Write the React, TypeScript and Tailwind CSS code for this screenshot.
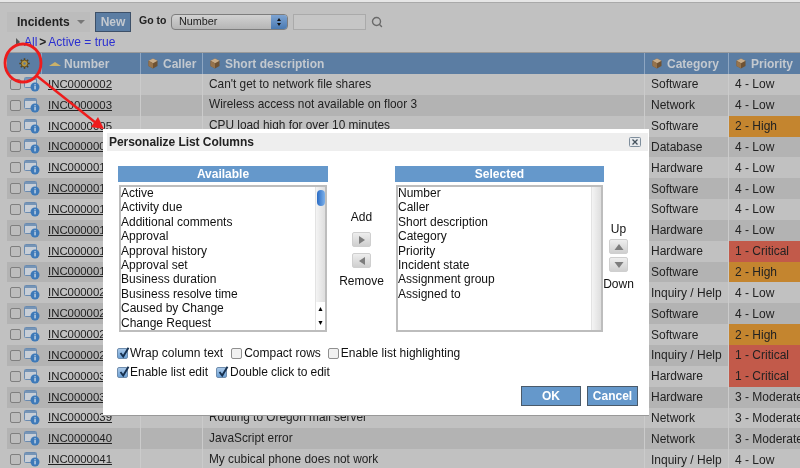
import { Search } from "lucide-react";

type Row = { n: string; d: string; c: string; p: string };
const rows: Row[] = [
  { n: "INC0000002", d: "Can't get to network file shares", c: "Software", p: "4 - Low" },
  { n: "INC0000003", d: "Wireless access not available on floor 3", c: "Network", p: "4 - Low" },
  { n: "INC0000005", d: "CPU load high for over 10 minutes", c: "Software", p: "2 - High" },
  { n: "INC0000006", d: "Oracle database offline", c: "Database", p: "4 - Low" },
  { n: "INC0000011", d: "Printer jam", c: "Hardware", p: "4 - Low" },
  { n: "INC0000012", d: "Email server slow", c: "Software", p: "4 - Low" },
  { n: "INC0000013", d: "EMAIL is slow", c: "Software", p: "4 - Low" },
  { n: "INC0000014", d: "Keyboard broken", c: "Hardware", p: "4 - Low" },
  { n: "INC0000015", d: "Server down", c: "Hardware", p: "1 - Critical" },
  { n: "INC0000016", d: "Reset password", c: "Software", p: "2 - High" },
  { n: "INC0000020", d: "How do I create a sub-folder", c: "Inquiry / Help", p: "4 - Low" },
  { n: "INC0000022", d: "Need software update", c: "Software", p: "4 - Low" },
  { n: "INC0000024", d: "Lost connection", c: "Software", p: "2 - High" },
  { n: "INC0000025", d: "Need help", c: "Inquiry / Help", p: "1 - Critical" },
  { n: "INC0000031", d: "When can we get off Remedy?", c: "Hardware", p: "1 - Critical" },
  { n: "INC0000032", d: "Hard drive failure", c: "Hardware", p: "3 - Moderate" },
  { n: "INC0000039", d: "Routing to Oregon mail server", c: "Network", p: "3 - Moderate" },
  { n: "INC0000040", d: "JavaScript error", c: "Network", p: "3 - Moderate" },
  { n: "INC0000041", d: "My cubical phone does not work", c: "Inquiry / Help", p: "4 - Low" },
];

const available = ["Active", "Activity due", "Additional comments", "Approval", "Approval history", "Approval set", "Business duration", "Business resolve time", "Caused by Change", "Change Request"];
const selected = ["Number", "Caller", "Short description", "Category", "Priority", "Incident state", "Assignment group", "Assigned to"];

function Cube() {
  return (
    <svg width="10" height="11" viewBox="0 0 10 11" className="shrink-0">
      <path d="M5 .5 9.5 2.8v5.2L5 10.5.5 8V2.8z" fill="#6f5233" />
      <path d="M5 .5 9.5 2.8 5 5.2.5 2.8z" fill="#c9ad8a" />
      <path d="M5 5.2v5.3L.5 8V2.8z" fill="#96734c" />
    </svg>
  );
}

function Gear() {
  return (
    <svg width="11" height="11" viewBox="0 0 11 11">
      <g stroke="#54431f" strokeWidth="1.6">
        <path d="M5.5 .3v10.4M.3 5.5h10.4M1.8 1.8l7.4 7.4M9.2 1.8 1.8 9.2" />
      </g>
      <circle cx="5.5" cy="5.5" r="3.4" fill="#b8973f" stroke="#54431f" strokeWidth=".8" />
      <circle cx="5.5" cy="5.5" r="1.2" fill="#5b7da3" />
    </svg>
  );
}

function InfoIcon() {
  return (
    <svg width="16" height="15" viewBox="0 0 16 15" className="shrink-0">
      <rect x=".5" y=".5" width="12" height="10" rx="1" fill="#c8ced6" stroke="#6a8bb0" />
      <rect x="1" y="1" width="11" height="2" fill="#7594b6" />
      <circle cx="11" cy="10" r="4.5" fill="#3d79b8" />
      <rect x="10.4" y="9" width="1.3" height="3.4" fill="#cfdcea" />
      <rect x="10.4" y="7.2" width="1.3" height="1.2" fill="#cfdcea" />
    </svg>
  );
}

function Check({ on }: { on?: boolean }) {
  return on ? (
    <span className="relative w-[11px] h-[11px] rounded-[2px] border border-[#6f8dad] bg-linear-to-b from-[#a9c8e8] to-[#6ea2d6] shrink-0">
      <svg width="13" height="13" viewBox="0 0 13 13" className="absolute -top-[3px] left-0">
        <path d="M2.5 7 5.2 10.5 10.5 1.8" fill="none" stroke="#16304f" strokeWidth="1.9" />
      </svg>
    </span>
  ) : (
    <span className="w-[11px] h-[11px] rounded-[2px] border border-[#8f8f8f] bg-[#f1f1f1] shrink-0" />
  );
}

function ArrowButton({ dir }: { dir: "l" | "r" | "u" | "d" }) {
  const pts = { l: "10,3 10,11 4,7", r: "4,3 4,11 10,7", u: "2.5,10 11.5,10 7,4", d: "2.5,4 11.5,4 7,10" }[dir];
  return (
    <div className="w-[19px] h-[15px] rounded-[2px] border border-[#cfcfcf] bg-linear-to-b from-[#eeeeee] to-[#cfcfcf] flex items-center justify-center">
      <svg width="14" height="14" viewBox="0 0 14 14">
        <polygon points={pts} fill="#7d7d7d" />
      </svg>
    </div>
  );
}

function ListBox({ items, thumb }: { items: string[]; thumb?: boolean }) {
  return (
    <div className="h-[147px] mx-px border-2 border-[#bdbdbd] flex bg-white">
      <div className="flex-1 -mt-[1px]">
        {items.map((t) => (
          <div key={t} className="h-[14.4px] leading-[14.4px] text-[12px] text-[#111]">{t}</div>
        ))}
      </div>
      <div className="w-[10px] bg-linear-to-r from-[#f4f4f4] to-[#dedede] border-l border-[#e3e3e3] flex flex-col items-center">
        {thumb && (
          <>
            <div className="w-[8px] h-[16px] mt-[3px] rounded-[4px] bg-linear-to-r from-[#2a6cc4] to-[#7db1ea]" />
            <div className="flex-1" />
            <div className="w-full h-[14px] text-[7px] leading-[14px] text-center text-black bg-white">▲</div>
            <div className="w-full h-[14px] text-[7px] leading-[14px] text-center text-black bg-white">▼</div>
          </>
        )}
      </div>
    </div>
  );
}

function HeaderCell({ w, label, flex }: { w?: string; label: string; flex?: boolean }) {
  return (
    <div className={`${w ?? ""} ${flex ? "flex-1" : ""} h-full flex items-center gap-[5px] pl-[7px] border-l border-[#8ea6c2] font-bold text-[12px] text-[#c4c9cf]`}>
      <Cube />
      <span>{label}</span>
    </div>
  );
}

export default function App() {
  return (
    <div className="relative w-[800px] h-[468px] overflow-hidden bg-[#c1c1c1] font-['Liberation_Sans',Arial,sans-serif] text-[12px] text-[#222] blur-[0.5px]">
      <div className="h-[3px] bg-[#e6e6e6] border-b border-[#a9a9a9]" />
      <div className="pl-[7px] h-[49px] flex flex-col">
        <div className="flex items-center h-[29px] pt-[8px]">
          <div className="w-[83px] h-[20px] bg-[#bcbcbc] flex items-center pl-[10px] gap-[7px] font-bold text-[12px] text-[#222]">
            Incidents
            <span className="w-0 h-0 border-x-[4px] border-x-transparent border-t-[4px] border-t-[#777]" />
          </div>
          <div className="ml-[5px] w-[36px] h-[20px] bg-[#5b7da3] border border-[#3d5068] flex items-center justify-center font-bold text-[#c4c9cf]">New</div>
          <span className="ml-[8px] w-[26px] whitespace-nowrap font-bold text-[10.5px] -mt-[2px]">Go to</span>
          <div className="ml-[6px] w-[117px] h-[16px] rounded-[4px] border border-[#7d7d7d] bg-linear-to-b from-[#d2d2d2] to-[#b5b5b5] flex items-center pl-[7px] relative overflow-hidden text-[10.8px]">
            Number
            <span className="absolute right-0 top-0 bottom-0 w-[16px] bg-linear-to-b from-[#7ea4d2] to-[#4a7ab2] flex flex-col items-center justify-center gap-[2px]">
              <span className="w-0 h-0 border-x-[2.5px] border-x-transparent border-b-[3px] border-b-[#111]" />
              <span className="w-0 h-0 border-x-[2.5px] border-x-transparent border-t-[3px] border-t-[#111]" />
            </span>
          </div>
          <div className="ml-[5px] w-[73px] h-[16px] bg-[#c6c6c6] border border-[#aaaaaa]" />
          <Search size={12} strokeWidth={2.8} className="ml-[5px] text-[#6a6a6a]" />
        </div>
        <div className="flex items-center h-[20px] pl-[9px] text-[12px]">
          <span className="w-0 h-0 border-y-[4px] border-y-transparent border-l-[4px] border-l-[#555] mr-[4px]" />
          <span className="text-[#2b2fd0]">All</span>
          <span className="font-bold text-[#222] mx-[2px]">&gt;</span>
          <span className="text-[#2b2fd0]">Active = true</span>
        </div>
      </div>

      <div className="ml-[7px]">
        <div className="h-[22px] flex bg-[#5b7da3] border-t border-[#9a9a9a]">
          <div className="w-[34px] h-full flex items-center justify-center"><Gear /></div>
          <div className="w-[99px] h-full flex items-center gap-[3px] pl-[7px] border-l border-[#8ea6c2] font-bold text-[#c4c9cf]">
            <span className="w-0 h-0 border-x-[6px] border-x-transparent border-b-[4px] border-b-[#c9b16a]" />
            <span>Number</span>
          </div>
          <HeaderCell w="w-[62px]" label="Caller" />
          <HeaderCell w="w-[442px]" label="Short description" />
          <HeaderCell w="w-[84px]" label="Category" />
          <HeaderCell flex label="Priority" />
        </div>
        {rows.map((r, i) => (
          <div key={r.n} className={`h-[20.85px] flex items-center ${i % 2 ? "bg-[#b3b3b3]" : "bg-[#c1c1c1]"}`}>
            <div className="w-[34px] shrink-0 flex items-center gap-[3px] pl-[3px]">
              <span className="w-[11px] h-[11px] rounded-[2px] border border-[#7f7f7f] bg-[#bdbdbd] shrink-0" />
              <InfoIcon />
            </div>
            <div className="w-[99px] shrink-0 pl-[7px] underline text-[11.4px]">{r.n}</div>
            <div className="w-[62px] shrink-0 h-full border-l border-[#cbcbcb]" />
            <div className="w-[442px] shrink-0 h-full flex items-center pl-[6px] border-l border-[#cbcbcb] text-[11.85px]">{r.d}</div>
            <div className="w-[84px] shrink-0 h-full flex items-center pl-[6px] border-l border-[#cbcbcb] whitespace-nowrap">{r.c}</div>
            <div className={`flex-1 min-w-0 h-full flex items-center pl-[6px] border-l border-[#cbcbcb] whitespace-nowrap overflow-hidden ${r.p.startsWith("2") ? "bg-[#c4852f]" : r.p.startsWith("1") ? "bg-[#c25a4a]" : ""}`}>{r.p}</div>
          </div>
        ))}
      </div>

      <svg className="absolute left-0 top-0 pointer-events-none" width="110" height="135" viewBox="0 0 110 135">
        <ellipse cx="23" cy="63" rx="18" ry="19" fill="none" stroke="#ee1c1c" strokeWidth="2.8" />
        <path d="M37 76 96 123" stroke="#ee1c1c" strokeWidth="2.4" />
        <polygon points="104,129 91,127 98,117" fill="#ee1c1c" />
      </svg>

      <div className="absolute left-[103px] top-[129px] w-[546px] h-[286px] bg-white p-[4px] text-[#111] shadow-[0_1px_0_#999]">
        <div className="h-[18px] w-[541px] bg-[#eeeeee] flex items-center justify-between pl-[2px] pr-[7px]">
          <span className="font-bold text-[12px] tracking-[-0.05px] text-[#222]">Personalize List Columns</span>
          <svg width="12" height="10" viewBox="0 0 12 10">
            <rect x=".5" y=".5" width="11" height="9" rx="1" fill="#e8ebee" stroke="#7f8e9c" />
            <path d="M3.5 2.5 8.5 7.5M8.5 2.5 3.5 7.5" stroke="#44515c" strokeWidth="1.3" />
          </svg>
        </div>

        <div className="flex mt-[15px] ml-[11px]">
          <div className="w-[210px]">
            <div className="h-[16px] bg-[#6598cb] text-center text-white font-bold leading-[16px] mb-[3px]">Available</div>
            <ListBox items={available} thumb />
          </div>
          <div className="w-[67px] flex flex-col items-center pt-[44px]">
            <span className="leading-[14px]">Add</span>
            <div className="mt-[8px] flex flex-col gap-[6px]">
              <ArrowButton dir="r" />
              <ArrowButton dir="l" />
            </div>
            <span className="mt-[6px] leading-[14px]">Remove</span>
          </div>
          <div className="w-[209px]">
            <div className="h-[16px] bg-[#6598cb] text-center text-white font-bold leading-[16px] mb-[3px]">Selected</div>
            <ListBox items={selected} />
          </div>
          <div className="w-[29px] flex flex-col items-center pt-[56px]">
            <span className="leading-[14px]">Up</span>
            <div className="mt-[3px] flex flex-col gap-[3px]">
              <ArrowButton dir="u" />
              <ArrowButton dir="d" />
            </div>
            <span className="mt-[5px] leading-[14px]">Down</span>
          </div>
        </div>

        <div className="ml-[10px] mt-[14px] flex flex-col gap-[5px]">
          <div className="flex items-center h-[14px]">
            <Check on /><span className="ml-[2px]">Wrap column text</span>
            <span className="ml-[8px] flex items-center"><Check /><span className="ml-[2px]">Compact rows</span></span>
            <span className="ml-[7px] flex items-center"><Check /><span className="ml-[2px]">Enable list highlighting</span></span>
          </div>
          <div className="flex items-center h-[14px]">
            <Check on /><span className="ml-[2px]">Enable list edit</span>
            <span className="ml-[8px] flex items-center"><Check on /><span className="ml-[3px] tracking-[-0.05px]">Double click to edit</span></span>
          </div>
        </div>

        <div className="flex justify-end gap-[6px] mt-[7px] pr-[7px]">
          <div className="w-[60px] h-[20px] bg-[#6598cb] border border-[#4a5a6a] flex items-center justify-center text-white font-bold">OK</div>
          <div className="w-[51px] h-[20px] bg-[#6598cb] border border-[#4a5a6a] flex items-center justify-center text-white font-bold">Cancel</div>
        </div>
      </div>
    </div>
  );
}
